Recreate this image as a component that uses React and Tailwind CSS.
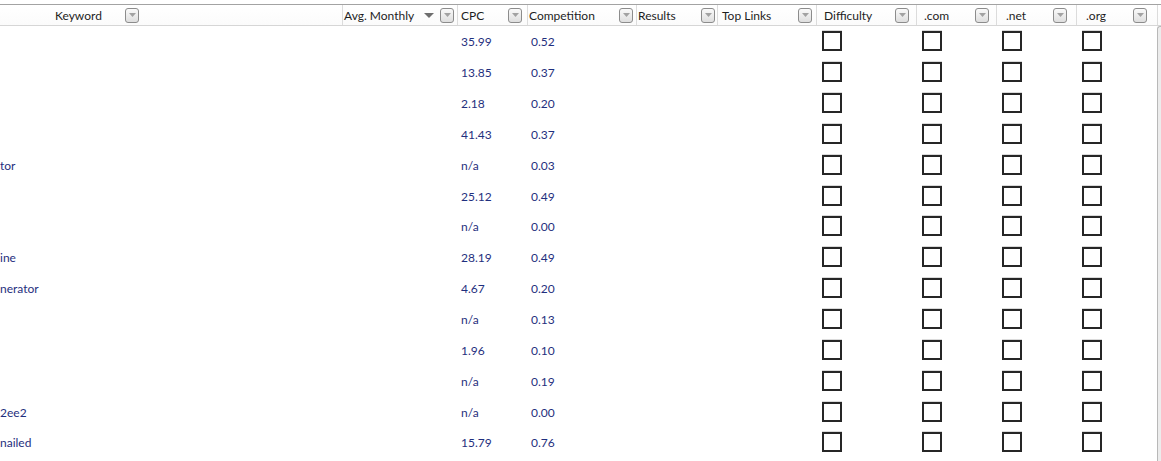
import React from 'react';

const font = { fontFamily: 'Lato, "Noto Sans", sans-serif' };

// column layout shared by the header and the body rows
const columns = [
  { key: 'keyword', label: 'Keyword', w: 'w-[342px]', head: 'pl-[55px] pr-[203px]', body: 'pl-0' },
  { key: 'avg', label: 'Avg. Monthly', w: 'w-[115px]', head: 'pl-[1px] pr-[3px] border-l border-[#dcdcdc]', body: 'pl-0', sort: true },
  { key: 'cpc', label: 'CPC', w: 'w-[70px]', head: 'pl-[3px] pr-[5px] border-l border-[#dcdcdc]', body: 'pl-[4px]' },
  { key: 'comp', label: 'Competition', w: 'w-[109px]', head: 'pl-[1px] pr-[3px] border-l border-[#dcdcdc]', body: 'pl-[4px]' },
  { key: 'results', label: 'Results', w: 'w-[81px]', head: 'pl-[1px] pr-[2px] border-l border-[#dcdcdc]', body: 'pl-0' },
  { key: 'links', label: 'Top Links', w: 'w-[99px]', head: 'pl-[4px] pr-[4px] border-l border-[#dcdcdc]', body: 'pl-0' },
  { key: 'difficulty', label: 'Difficulty', w: 'w-[100px]', head: 'pl-[7px] pr-[7px] border-l border-[#dcdcdc]', body: 'pl-[6px]', check: true },
  { key: 'com', label: '.com', w: 'w-[80px]', head: 'pl-[7px] pr-[7px] border-l border-[#dcdcdc]', body: 'pl-[6px]', check: true },
  { key: 'net', label: '.net', w: 'w-[80px]', head: 'pl-[9px] pr-[9px] border-l border-[#dcdcdc]', body: 'pl-[6px]', check: true },
  { key: 'org', label: '.org', w: 'w-[81px]', head: 'pl-[9px] pr-[10px] border-l border-[#dcdcdc]', body: 'pl-[6px]', check: true },
];

const rows = [
  { keyword: '', cpc: '35.99', comp: '0.52' },
  { keyword: '', cpc: '13.85', comp: '0.37' },
  { keyword: '', cpc: '2.18', comp: '0.20' },
  { keyword: '', cpc: '41.43', comp: '0.37' },
  { keyword: 'tor', cpc: 'n/a', comp: '0.03' },
  { keyword: '', cpc: '25.12', comp: '0.49' },
  { keyword: '', cpc: 'n/a', comp: '0.00' },
  { keyword: 'ine', cpc: '28.19', comp: '0.49' },
  { keyword: 'nerator', cpc: '4.67', comp: '0.20' },
  { keyword: '', cpc: 'n/a', comp: '0.13' },
  { keyword: '', cpc: '1.96', comp: '0.10' },
  { keyword: '', cpc: 'n/a', comp: '0.19' },
  { keyword: '2ee2', cpc: 'n/a', comp: '0.00' },
  { keyword: 'nailed', cpc: '15.79', comp: '0.76' },
];

const FilterButton = () => (
  <div className="w-[14px] h-[15px] shrink-0 rounded-[3px] border border-[#8c8c8c] bg-gradient-to-b from-[#fafafa] to-[#dedede] flex items-center justify-center">
    <svg width="7" height="4" viewBox="0 0 7 4">
      <path d="M0 0 H7 L3.5 4 Z" fill="#a2a2a2" />
    </svg>
  </div>
);

const CheckBox = () => (
  <div className="w-[20px] h-[20px] border-2 border-[#262626] bg-white shadow-[0_-1px_0_#dadada]" />
);

const HeaderCell = ({ col }) => (
  <div className={`${col.w} ${col.head} h-full flex items-center shrink-0`}>
    <span className="mt-[2px] text-[12px] text-[#1e1e1e] whitespace-nowrap">{col.label}</span>
    {col.sort && (
      <svg className="ml-auto mr-[6px]" width="10" height="5" viewBox="0 0 10 5">
        <path d="M0 0 H10 L5 5 Z" fill="#6e6e6e" />
      </svg>
    )}
    <div className={col.sort ? '' : 'ml-auto'}>
      <FilterButton />
    </div>
  </div>
);

const BodyCell = ({ col, row }) => {
  let content = null;
  if (col.check) content = <CheckBox />;
  else if (row[col.key]) content = <span className="mt-[2px] text-[12px] text-[#1f2f7e] whitespace-nowrap">{row[col.key]}</span>;
  return <div className={`${col.w} ${col.body} h-full flex items-center shrink-0 overflow-hidden`}>{content}</div>;
};

export default function App() {
  return (
    <div className="w-[1161px] h-[461px] bg-white overflow-hidden" style={font}>
      {/* column headers */}
      <div className="mt-[4px] h-[22px] flex border-t border-b border-t-[#a3a3a3] border-b-[#d6d6d6] bg-gradient-to-b from-white to-[#fbfbfb]">
        {columns.map((col) => (
          <HeaderCell key={col.key} col={col} />
        ))}
        <div className="w-[4px] h-full border-l border-[#dcdcdc]" />
      </div>

      {/* grid body + vertical scrollbar */}
      <div className="flex h-[435px]">
        <div className="w-[1157px] flex flex-col">
          {rows.map((row, i) => (
            <div key={i} className="h-[30.85px] flex items-center shrink-0">
              {columns.map((col) => (
                <BodyCell key={col.key} col={col} row={row} />
              ))}
            </div>
          ))}
        </div>
        <div className="w-[4px] h-full bg-[#ececec] border-l border-t border-[#b8b8b8] rounded-tl-[3px]" />
      </div>
    </div>
  );
}
